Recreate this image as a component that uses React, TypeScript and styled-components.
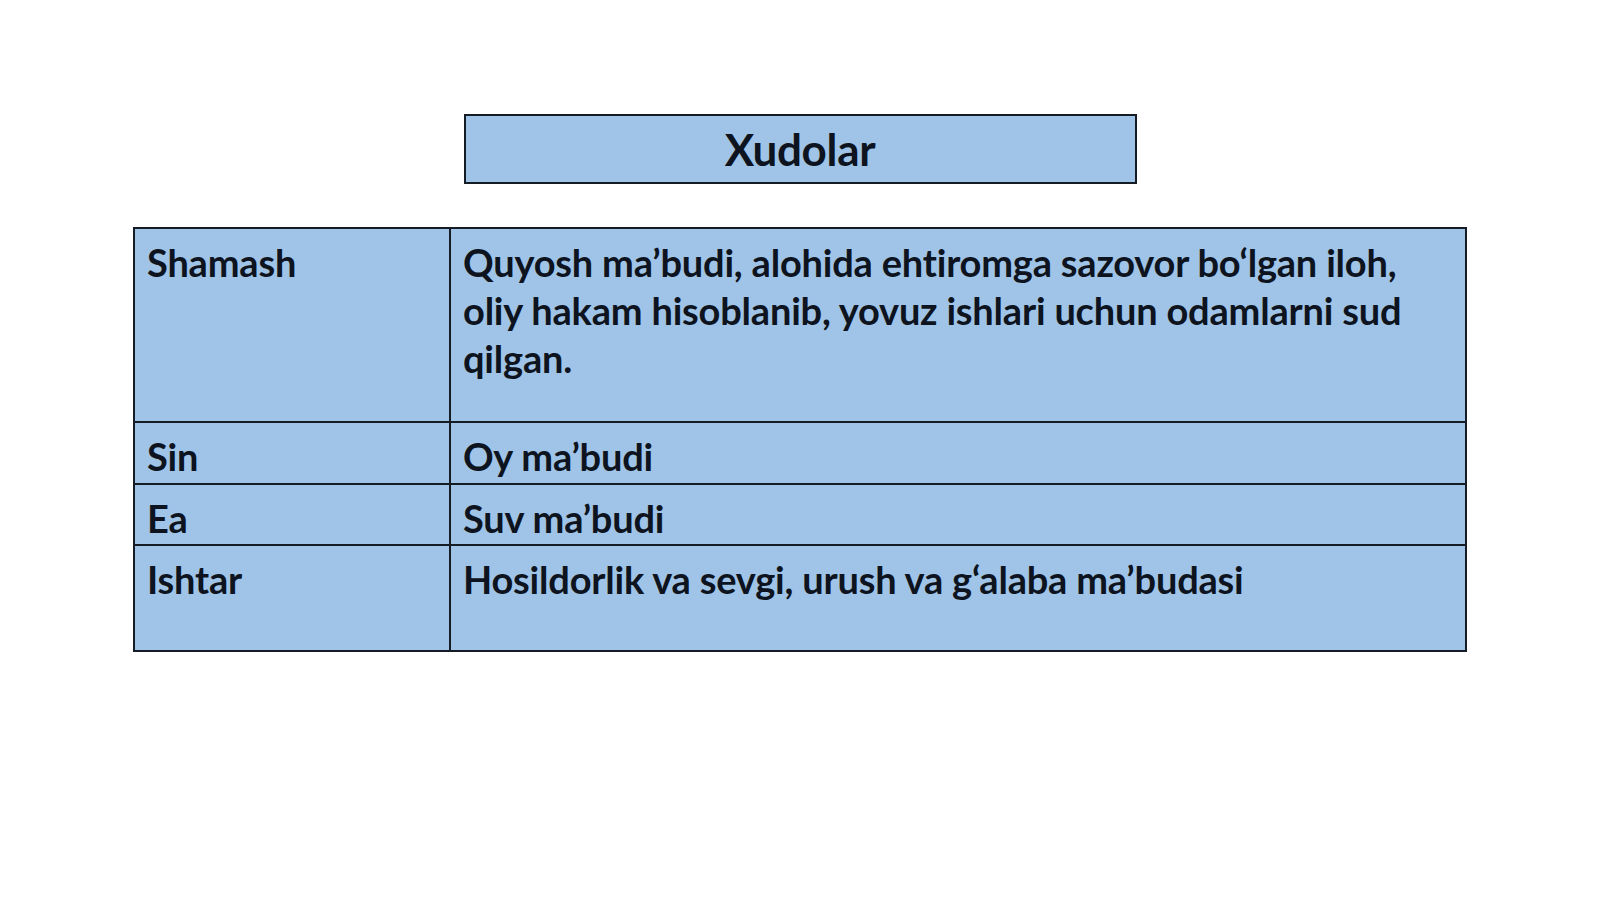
import styled, { createGlobalStyle } from 'styled-components'

const GlobalStyle = createGlobalStyle`
  html, body {
    margin: 0;
    padding: 0;
    background: #fff;
  }
  body {
    font-family: 'Lato', 'Liberation Sans', sans-serif;
  }
`

const Slide = styled.div`
  width: 1600px;
  height: 899px;
  box-sizing: border-box;
  padding-top: 114px;
  display: flex;
  flex-direction: column;
  align-items: center;
  background: #fff;
  overflow: hidden;
`

const TitleBox = styled.div`
  width: 673px;
  height: 70px;
  box-sizing: border-box;
  border: 2px solid #161c26;
  background: #a0c4e8;
  display: flex;
  align-items: center;
  justify-content: center;
  font-size: 44px;
  font-weight: 700;
  color: #0d1420;
  letter-spacing: -0.3px;
`

const Table = styled.table`
  margin-top: 43px;
  width: 1334px;
  border-collapse: collapse;
  background: #a0c4e8;
  color: #0d1420;
  font-size: 38px;
  font-weight: 700;
  line-height: 48px;
  letter-spacing: -0.2px;
`

const Cell = styled.td<{ $w?: number }>`
  border: 2px solid #161c26;
  vertical-align: top;
  padding: 9px 40px 0 12px;
  box-sizing: border-box;
  width: ${p => (p.$w ? `${p.$w}px` : 'auto')};
`

const Row = styled.tr<{ $h: number }>`
  height: ${p => p.$h}px;
`

const rows = [
  {
    name: 'Shamash',
    text: 'Quyosh ma’budi, alohida ehtiromga sazovor bo‘lgan iloh, oliy hakam hisoblanib, yovuz ishlari uchun odamlarni sud qilgan.',
    h: 194
  },
  { name: 'Sin', text: 'Oy ma’budi', h: 62 },
  { name: 'Ea', text: 'Suv ma’budi', h: 61 },
  { name: 'Ishtar', text: 'Hosildorlik va sevgi, urush va g‘alaba ma’budasi', h: 106 }
]

export default function App() {
  return (
    <>
      <GlobalStyle />
      <Slide>
        <TitleBox>Xudolar</TitleBox>
        <Table>
          <tbody>
            {rows.map((r, i) => (
              <Row key={r.name} $h={r.h}>
                <Cell $w={i === 0 ? 316 : undefined}>{r.name}</Cell>
                <Cell>{r.text}</Cell>
              </Row>
            ))}
          </tbody>
        </Table>
      </Slide>
    </>
  )
}
